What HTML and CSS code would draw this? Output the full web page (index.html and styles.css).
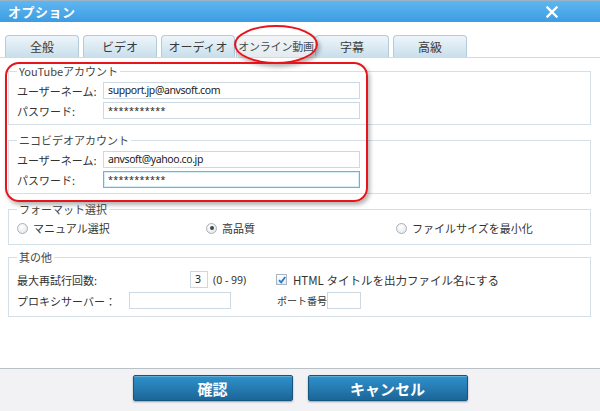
FILE: index.html
```html
<!DOCTYPE html>
<html lang="ja">
<head>
    <meta charset="UTF-8">
    <title>オプション</title>
    <link rel="stylesheet" href="styles.css">
</head>
<body>
    <div class="window">
        <div class="titlebar">
            <span class="title">オプション</span>
            <svg class="close" width="12" height="12" viewBox="0 0 12 12">
                <path d="M1.5 1.5 L10.5 10.5 M10.5 1.5 L1.5 10.5" stroke="#fff" stroke-width="2.4" stroke-linecap="square"/>
            </svg>
        </div>

        <div class="tabs">
            <div class="tab">全般</div>
            <div class="tab">ビデオ</div>
            <div class="tab">オーディオ</div>
            <div class="tab active">オンライン動画</div>
            <div class="tab">字幕</div>
            <div class="tab">高級</div>
        </div>

        <div class="panel">
            <fieldset class="group first">
                <legend>YouTubeアカウント</legend>
                <div class="field">
                    <span class="label">ユーザーネーム:</span>
                    <div class="input">support.jp@anvsoft.com</div>
                </div>
                <div class="field">
                    <span class="label">パスワード:</span>
                    <div class="input secret">***********</div>
                </div>
            </fieldset>

            <fieldset class="group second">
                <legend>ニコビデオアカウント</legend>
                <div class="field">
                    <span class="label">ユーザーネーム:</span>
                    <div class="input">anvsoft@yahoo.co.jp</div>
                </div>
                <div class="field">
                    <span class="label">パスワード:</span>
                    <div class="input secret focused">***********</div>
                </div>
            </fieldset>

            <fieldset class="group format">
                <legend>フォーマット選択</legend>
                <div class="radios">
                    <div class="radio"><span class="dot"></span>マニュアル選択</div>
                    <div class="radio checked"><span class="dot"></span>高品質</div>
                    <div class="radio"><span class="dot"></span>ファイルサイズを最小化</div>
                </div>
            </fieldset>

            <fieldset class="group other">
                <legend>其の他</legend>
                <div class="row">
                    <span class="retry-label">最大再試行回数:</span>
                    <div class="input tiny">3</div>
                    <span class="range">(0 - 99)</span>
                    <span class="check">
                        <svg width="8" height="8" viewBox="0 0 8 8"><path d="M1 4.2 L3.2 6.4 L7.2 1" fill="none" stroke="#1f7fd0" stroke-width="1.8"/></svg>
                    </span>
                    <span class="check-label">HTML タイトルを出力ファイル名にする</span>
                </div>
                <div class="row">
                    <span class="proxy-label">プロキシサーバー：</span>
                    <div class="input proxy"></div>
                    <span class="port-label">ポート番号</span>
                    <div class="input port"></div>
                </div>
            </fieldset>
        </div>

        <div class="footer">
            <button class="btn">確認</button>
            <button class="btn">キャンセル</button>
        </div>

        <!-- red highlight marks drawn over the dialog -->
        <div class="mark mark-tab"></div>
        <div class="mark mark-accounts"></div>
    </div>
</body>
</html>
```

FILE: styles.css
```css
body {
    margin: 0;
    background-color: #fff;
    font-family: "Noto Sans CJK JP", "Noto Sans", sans-serif;
    color: #333;
}
.window {
    position: relative;
    width: 600px;
    height: 411px;
    display: flex;
    flex-direction: column;
    overflow: hidden;
}
.titlebar {
    height: 22px;
    display: flex;
    align-items: center;
    justify-content: space-between;
    padding: 0 42px 0 8px;
    background: linear-gradient(#5fb6f0, #3d9de2);
    border-top: 1px solid #9bb3c6;
    box-sizing: border-box;
}
.title {
    color: #fff;
    font-size: 13px;
    font-weight: bold;
    letter-spacing: 0.5px;
}
.tabs {
    display: flex;
    gap: 4px;
    margin-top: 12px;
    padding-left: 5px;
    height: 23px;
    border-bottom: 1px solid #ccdbe6;
}
.tab {
    width: 74px;
    height: 22px;
    box-sizing: border-box;
    border: 1px solid #b3cbda;
    border-bottom: none;
    border-radius: 4px 4px 0 0;
    background: linear-gradient(#edf5fa, #c9dfec);
    font-size: 12px;
    line-height: 21px;
    text-align: center;
    color: #3a3a3a;
    margin-top: 1px;
    white-space: nowrap;
}
.tab.active {
    width: 80px;
    margin-left: -3px;
    margin-right: -5px;
    background: linear-gradient(#f2f5f7, #e4eaee);
    border-color: #c9d5dd;
    color: #3f4e5c;
    font-size: 11px;
    letter-spacing: -0.2px;
}
.panel {
    flex: 1;
    padding-top: 6px;
}
.group {
    border: 1px solid #d5dfe8;
    margin: 0 9px 0 8px;
    padding: 4px 8px 5px 8px;
    min-width: 0;
}
.group legend {
    padding: 0 2px;
    font-size: 11px;
    line-height: 14px;
    color: #444;
}
.group.second {
    margin-top: 8px;
}
.group.format {
    margin-top: 8px;
    padding: 4px 8px 8px 8px;
}
.group.other {
    margin-top: 5px;
    padding: 7px 8px 7px 8px;
}
.field {
    display: flex;
    align-items: center;
    height: 17px;
}
.field + .field {
    margin-top: 3px;
}
.label {
    width: 86px;
    font-size: 11px;
}
.input {
    height: 17px;
    box-sizing: border-box;
    border: 1px solid #cdd9e2;
    background-color: #fff;
    font-family: "Noto Sans", sans-serif;
    font-size: 10.5px;
    letter-spacing: -0.4px;
    line-height: 15px;
    padding: 0 4px;
    color: #222;
}
.field .input {
    width: 257px;
}
.input.secret {
    font-size: 9px;
    letter-spacing: 0.3px;
}
.field .input.focused {
    border-color: #5cb8ea;
    box-shadow: inset 0 0 0 1px rgba(92,184,234,0.25);
}
.radios {
    display: grid;
    grid-template-columns: 189px 190px 1fr;
    height: 16px;
    align-items: center;
}
.radio {
    display: flex;
    align-items: center;
    gap: 5px;
    font-size: 11px;
}
.radio .dot {
    width: 11px;
    height: 11px;
    box-sizing: border-box;
    border: 1px solid #a9b1b8;
    border-radius: 50%;
    background: radial-gradient(circle at 40% 35%, #fff, #dfe3e6);
    display: flex;
    align-items: center;
    justify-content: center;
}
.radio.checked .dot::after {
    content: "";
    width: 4px;
    height: 4px;
    border-radius: 50%;
    background-color: #444;
}
.row {
    display: flex;
    align-items: center;
    height: 17px;
    font-size: 11px;
    white-space: nowrap;
}
.row + .row {
    margin-top: 4px;
}
.retry-label {
    width: 173px;
}
.input.tiny {
    width: 18px;
    padding: 0 0 0 4px;
}
.range {
    width: 61px;
    margin-left: 5px;
    font-family: "Noto Sans", sans-serif;
    font-size: 10.5px;
}
.check {
    width: 11px;
    height: 11px;
    box-sizing: border-box;
    border: 1px solid #a9b6c2;
    background: linear-gradient(#fff, #e6ebef);
    display: flex;
    align-items: center;
    justify-content: center;
    margin-left: 2px;
    margin-right: 6px;
}
.check-label {
    font-size: 11.5px;
}
.proxy-label {
    width: 112px;
}
.input.proxy {
    width: 102px;
}
.port-label {
    width: 50px;
    margin-left: 46px;
    font-size: 10px;
}
.input.port {
    width: 34px;
}
.footer {
    height: 43px;
    box-sizing: border-box;
    border-top: 1px solid #b9c0c6;
    background-color: #f2f2f4;
    display: flex;
    justify-content: center;
    gap: 15px;
    padding-top: 6px;
}
.btn {
    width: 160px;
    height: 26px;
    border: 1px solid #17547f;
    border-radius: 2px;
    background: linear-gradient(#2f92cc, #1c6598);
    color: #fff;
    font-family: "Noto Sans CJK JP", sans-serif;
    font-size: 15px;
    font-weight: bold;
    box-shadow: 0 1px 2px rgba(0,0,0,0.35), inset 0 1px 0 rgba(255,255,255,0.25);
    padding: 0;
}
.mark {
    position: absolute;
    border: 2px solid #e8141c;
    box-shadow: 2px 3px 4px rgba(0,0,0,0.3);
}
.mark-tab {
    left: 234px;
    top: 25px;
    width: 80px;
    height: 35px;
    border-radius: 50%;
}
.mark-accounts {
    left: 5px;
    top: 62px;
    width: 359px;
    height: 136px;
    border-radius: 14px;
}
```
